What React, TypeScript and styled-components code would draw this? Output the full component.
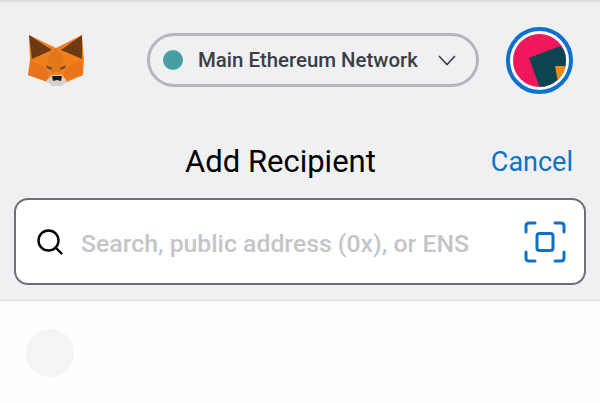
import React from "react";
import styled, { createGlobalStyle } from "styled-components";

const GlobalStyle = createGlobalStyle`
  html, body {
    margin: 0;
    padding: 0;
    background: #eff0f2;
    font-family: Roboto, "Liberation Sans", sans-serif;
  }
`;

const Screen = styled.div`
  width: 600px;
  height: 403px;
  overflow: hidden;
  display: flex;
  flex-direction: column;
  background: #eff0f2;
  border-top: 2px solid #dcdcdd;
  box-sizing: border-box;
`;

const Header = styled.div`
  display: flex;
  align-items: center;
  height: 116px;
  padding: 0 11px 0 27px;
  flex-shrink: 0;
`;

const FoxLogo = styled.svg`
  width: 58px;
  height: 56px;
  flex-shrink: 0;
`;

const NetworkPill = styled.div`
  margin-left: 62px;
  width: 332px;
  height: 54px;
  box-sizing: border-box;
  border: 3px solid #b5b6b9;
  border-radius: 27px;
  display: flex;
  align-items: center;
  padding: 0 20px 0 13px;
`;

const NetworkDot = styled.span`
  width: 20px;
  height: 20px;
  border-radius: 50%;
  background: #479ea3;
  flex-shrink: 0;
`;

const NetworkName = styled.span`
  margin-left: 15px;
  flex: 1;
  font-size: 20.4px;
  font-weight: 500;
  color: #3c3e43;
  white-space: nowrap;
`;

const Avatar = styled.div`
  margin-left: 27px;
  width: 67px;
  height: 67px;
  box-sizing: border-box;
  border: 4px solid #0f72c8;
  border-radius: 50%;
  padding: 3px;
  background: #fbfbfc;
  flex-shrink: 0;
`;

const AvatarArt = styled.svg`
  display: block;
  width: 100%;
  height: 100%;
  border-radius: 50%;
`;

const TitleRow = styled.div`
  display: grid;
  grid-template-columns: 1fr auto;
  align-items: center;
  height: 46px;
  margin-top: 21px;
  padding: 0 27px 0 185px;
  flex-shrink: 0;
`;

const Title = styled.div`
  font-size: 31px;
  color: #000;
  line-height: 46px;
`;

const CancelLink = styled.div`
  font-size: 27px;
  color: #0f72c8;
  line-height: 46px;
`;

const SearchBox = styled.div`
  margin: 13px 14px 0;
  height: 87px;
  box-sizing: border-box;
  flex-shrink: 0;
  background: #fff;
  border: 2px solid #6e7076;
  border-radius: 14px;
  display: flex;
  align-items: center;
  padding: 0 18px 0 21px;
`;

const SearchPlaceholder = styled.div`
  flex: 1;
  margin-left: 18px;
  padding-top: 3px;
  font-size: 24.8px;
  font-weight: 500;
  color: #c4c5c8;
  white-space: nowrap;
`;

const ListArea = styled.div`
  margin-top: 15px;
  flex: 1;
  background: #fefefe;
  border-top: 1px solid #dfe0e1;
  padding: 28px 26px;
`;

const Placeholder = styled.div`
  width: 48px;
  height: 48px;
  border-radius: 50%;
  background: #f4f4f5;
`;

const Fox = () => (
  <FoxLogo viewBox="0 0 58 56">
    <polygon points="2,3 29,16 55,3 57,28 56,43 40,50 30,54 20,50 1,43 3,28" fill="#f27f1c" />
    <polygon points="1,43 4,28 20,37 22,50" fill="#e8731a" />
    <polygon points="56,43 54,28 38,37 36,50" fill="#ea741a" />
    <polygon points="20,25 29,17 37,25 33,40 25,40" fill="#e2761b" />
    <polygon points="2,3 25,18 5,27 4,20" fill="#6e3a14" />
    <polygon points="55,3 34,18 55,27 55,20" fill="#6e3a14" />
    <polygon points="19,33 25,36 24,38 20,36" fill="#5a4a43" />
    <polygon points="39,33 33,36 34,38 38,36" fill="#5a4a43" />
    <polygon points="19,49 25,43 35,43 40,49 35,54 25,54" fill="#d8cfc8" />
    <polygon points="25,44 35,44 34,49 30,48 26,49" fill="#1d1a19" />
  </FoxLogo>
);

const App: React.FC = () => (
  <>
    <GlobalStyle />
    <Screen>
      <Header>
        <Fox />
        <NetworkPill>
          <NetworkDot />
          <NetworkName>Main Ethereum Network</NetworkName>
          <svg width="18" height="11" viewBox="0 0 18 11" fill="none" stroke="#3c3e43" strokeWidth="1.6">
            <path d="M1 1 L9 9.5 L17 1" />
          </svg>
        </NetworkPill>
        <Avatar>
          <AvatarArt viewBox="0 0 53 53">
            <rect width="53" height="53" fill="#f0175c" />
            <polygon points="16,24 47,12 53,18 53,53 27,54" fill="#0b4650" />
            <polygon points="42,32 53,32 53,53 46,53" fill="#f28c0f" />
          </AvatarArt>
        </Avatar>
      </Header>
      <TitleRow>
        <Title>Add Recipient</Title>
        <CancelLink>Cancel</CancelLink>
      </TitleRow>
      <SearchBox>
        <svg width="26" height="26" viewBox="0 0 26 26" fill="none" stroke="#000" strokeWidth="2.4" strokeLinecap="round">
          <circle cx="11.5" cy="11.5" r="10" />
          <path d="M19 19 L24.5 24.5" />
        </svg>
        <SearchPlaceholder>Search, public address (0x), or ENS</SearchPlaceholder>
        <svg width="42" height="42" viewBox="0 0 42 42" fill="none" stroke="#0f72c8" strokeWidth="3" strokeLinecap="round" strokeLinejoin="round">
          <path d="M2 11 V5 Q2 2 5 2 H11" />
          <path d="M31 2 H37 Q40 2 40 5 V11" />
          <path d="M2 31 V37 Q2 40 5 40 H11" />
          <path d="M31 40 H37 Q40 40 40 37 V31" />
          <rect x="13" y="12.5" width="16" height="17" rx="2.5" />
        </svg>
      </SearchBox>
      <ListArea>
        <Placeholder />
      </ListArea>
    </Screen>
  </>
);

export default App;
